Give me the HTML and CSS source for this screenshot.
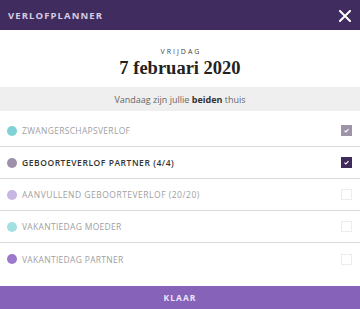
FILE: index.html
```html
<!DOCTYPE html>
<html lang="nl">
<head>
<meta charset="utf-8">
<title>Verlofplanner</title>
<link rel="stylesheet" href="styles.css">
</head>
<body>
<div class="app">
  <header class="topbar">
    <span class="title">VERLOFPLANNER</span>
    <svg class="close" width="12" height="12" viewBox="0 0 12 12"><path d="M1 1L11 11M11 1L1 11" stroke="#fff" stroke-width="2" stroke-linecap="square"/></svg>
  </header>
  <section class="datebox">
    <div class="weekday">VRIJDAG</div>
    <div class="date">7 februari 2020</div>
  </section>
  <div class="status"><span>Vandaag zijn jullie <b>beiden</b> thuis</span></div>
  <ul class="list">
    <li class="row">
      <span class="dot dot-teal"></span>
      <span class="label">ZWANGERSCHAPSVERLOF</span>
      <span class="box box-muted"><svg width="11" height="11" viewBox="0 0 11 11"><path d="M3 5.6L4.7 7.2L8 3.8" stroke="#fff" stroke-width="1.3" fill="none"/></svg></span>
    </li>
    <li class="row">
      <span class="dot dot-grey"></span>
      <span class="label label-active">GEBOORTEVERLOF PARTNER (4/4)</span>
      <span class="box box-dark"><svg width="11" height="11" viewBox="0 0 11 11"><path d="M3 5.6L4.7 7.2L8 3.8" stroke="#fff" stroke-width="1.3" fill="none"/></svg></span>
    </li>
    <li class="row">
      <span class="dot dot-lavender"></span>
      <span class="label label-wide">AANVULLEND GEBOORTEVERLOF (20/20)</span>
      <span class="box"></span>
    </li>
    <li class="row">
      <span class="dot dot-aqua"></span>
      <span class="label">VAKANTIEDAG MOEDER</span>
      <span class="box"></span>
    </li>
    <li class="row row-last">
      <span class="dot dot-purple"></span>
      <span class="label">VAKANTIEDAG PARTNER</span>
      <span class="box"></span>
    </li>
  </ul>
  <button class="done">KLAAR</button>
</div>
</body>
</html>
```
FILE: styles.css
```css
* { box-sizing: border-box; }
html, body { margin: 0; padding: 0; }
body {
  font-family: "Open Sans", "Liberation Sans", sans-serif;
  background: #fff;
  color: #444;
}
.app {
  display: flex;
  flex-direction: column;
  height: 309px;
  width: 360px;
}
.topbar {
  height: 30px;
  background: #412c5f;
  display: flex;
  align-items: center;
  justify-content: space-between;
  padding: 0 9px 0 8px;
}
.title {
  color: #d6cde3;
  font-size: 9.5px;
  font-weight: 700;
  letter-spacing: 1.1px;
}
.close { display: block; margin-top: 2px; }
.datebox {
  height: 57px;
  display: flex;
  flex-direction: column;
  align-items: center;
  padding-top: 17px;
}
.weekday {
  font-size: 7px;
  line-height: 10px;
  letter-spacing: 2px;
  color: #444;
  padding-left: 2px;
}
.date {
  font-family: "Liberation Serif", "Times New Roman", serif;
  font-weight: 700;
  font-size: 18.5px;
  line-height: 22px;
  color: #222;
}
.status {
  height: 24px;
  background: #efefef;
  display: flex;
  align-items: center;
  justify-content: center;
  font-size: 9px;
  color: #666;
}
.status b { color: #333; font-weight: 700; }
.list {
  list-style: none;
  margin: 0;
  padding: 4px 0 0;
  flex: 1;
}
.row {
  height: 32px;
  display: flex;
  align-items: center;
  padding: 0 8px 0 7px;
  border-bottom: 1px solid #dadada;
}
.row-last { border-bottom: none; }
.dot {
  width: 10px;
  height: 10px;
  border-radius: 50%;
  flex: none;
  margin-right: 5px;
}
.dot-teal { background: #7fd2d5; }
.dot-grey { background: #9d90ab; }
.dot-lavender { background: #c7b6e2; }
.dot-aqua { background: #a3e0e3; }
.dot-purple { background: #9c79cd; }
.label {
  flex: 1;
  font-size: 8.5px;
  letter-spacing: 0.3px;
  color: #a0a0a0;
}
.label-wide { letter-spacing: 0.5px; }
.label-active {
  color: #333;
  font-weight: 600;
  letter-spacing: 0.55px;
}
.box {
  width: 11px;
  height: 11px;
  border: 1px solid #ececec;
  display: flex;
  align-items: center;
  justify-content: center;
  flex: none;
}
.box svg { display: block; }
.box-muted { background: #9e94aa; border-color: #9e94aa; }
.box-dark { background: #3f2a5c; border-color: #3f2a5c; }
.done {
  height: 23px;
  border: none;
  background: #8762b9;
  color: #eee4f7;
  font-family: "Open Sans", "Liberation Sans", sans-serif;
  font-size: 8.5px;
  font-weight: 700;
  letter-spacing: 1px;
  padding: 0;
  width: 100%;
}
```
